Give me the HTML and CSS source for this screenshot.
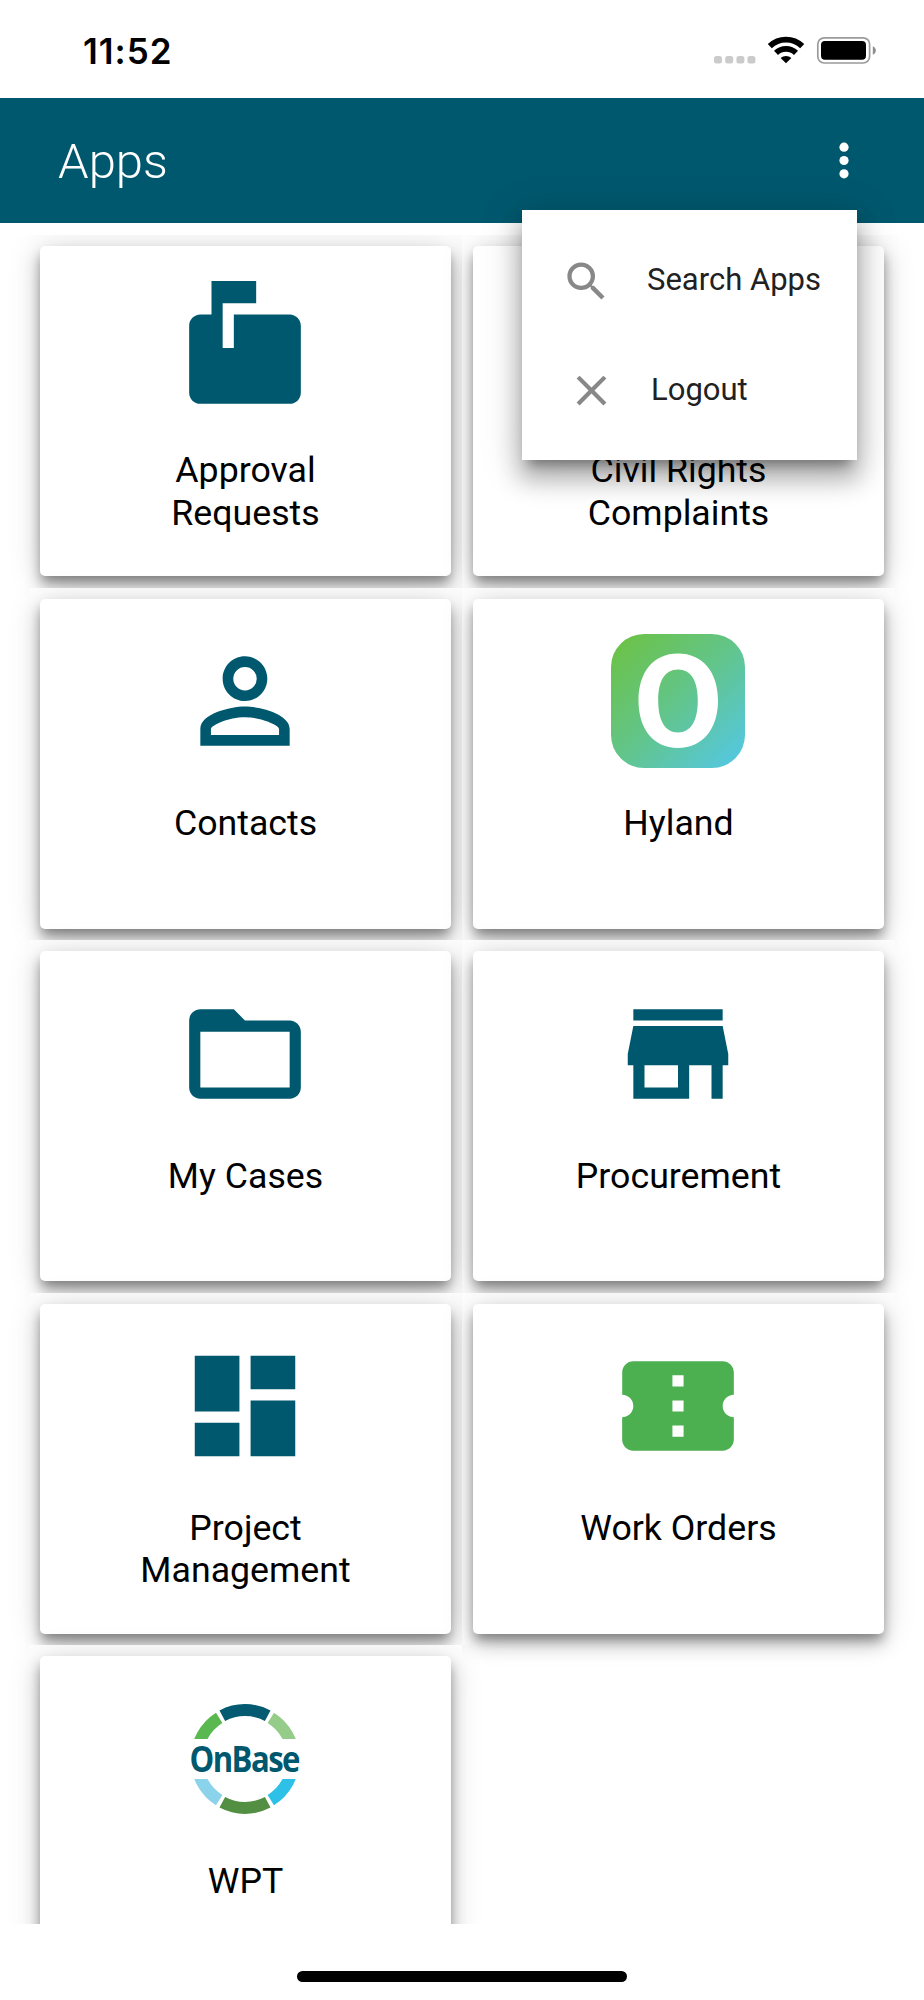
FILE: index.html
```html
<!DOCTYPE html>
<html lang="en">
<head>
<meta charset="utf-8">
<title>Apps</title>
<link rel="stylesheet" href="styles.css">
</head>
<body>
<div class="screen">
  <header class="status">
    <span class="time">11:52</span>
    <svg class="indicators" viewBox="0 0 170 40">
      <g fill="#cbcbcb">
        <rect x="4" y="26" width="8" height="7.5" rx="2.5"/><rect x="15.2" y="26" width="8" height="7.5" rx="2.5"/><rect x="26.4" y="26" width="8" height="7.5" rx="2.5"/><rect x="37.4" y="26" width="8" height="7.5" rx="2.5"/>
      </g>
      <g fill="none" stroke="#000" stroke-width="5.8">
        <path d="M59.800 16.200a23.400 23.400 0 0 1 32.400 0"/>
        <path d="M66 22.800a14.600 14.600 0 0 1 20 0"/>
      </g>
      <path d="M70.600 27.900a8.300 8.300 0 0 1 10.800 0L76 33.200z"/>
      <rect x="107.800" y="7.800" width="51.800" height="25.200" rx="6.500" fill="none" stroke="#9b9b9b" stroke-width="1.700"/>
      <rect x="111" y="11" width="45" height="18.800" rx="4"/>
      <path d="M162.800 16.200c4 1.600 4 7 0 8.600z" fill="#8d8d8d"/>
    </svg>
  </header>

  <nav class="toolbar">
    <h1 class="title">Apps</h1>
    <svg class="more" viewBox="0 0 10 38" fill="#fff"><circle cx="5" cy="5.200" r="4.600"/><circle cx="5" cy="18.500" r="4.600"/><circle cx="5" cy="31.800" r="4.600"/></svg>
    <div class="menu">
      <div class="menu-item">
        <svg class="menu-icon" viewBox="0 0 24 24"><path d="M15.5 14h-.79l-.28-.27A6.471 6.471 0 0 0 16 9.5 6.5 6.5 0 1 0 9.5 16c1.61 0 3.09-.59 4.23-1.57l.27.28v.79l5 4.99L20.49 19l-4.99-5zm-6 0C7.01 14 5 11.99 5 9.5S7.01 5 9.5 5 14 7.01 14 9.5 11.99 14 9.5 14z"/></svg>
        <span class="menu-text">Search Apps</span>
      </div>
      <div class="menu-item logout">
        <svg class="menu-icon" viewBox="0 0 24 24"><path d="M19 6.41 17.59 5 12 10.59 6.41 5 5 6.41 10.59 12 5 17.59 6.41 19 12 13.41 17.59 19 19 17.59 13.41 12z"/></svg>
        <span class="menu-text">Logout</span>
      </div>
    </div>
  </nav>

  <main class="apps">
    <div class="cell"><section class="card">
      <svg class="icon" viewBox="0 0 24 24"><path d="M20 6H10v6H8V4h6V0H6v6H4c-1.1 0-2 .9-2 2v12c0 1.1.9 2 2 2h16c1.1 0 2-.9 2-2V8c0-1.1-.9-2-2-2z"/></svg>
      <p class="label">Approval<br>Requests</p>
    </section></div>
    <div class="cell"><section class="card">
      <div class="icon"></div>
      <p class="label">Civil Rights<br>Complaints</p>
    </section></div>
    <div class="cell"><section class="card">
      <svg class="icon" viewBox="0 0 24 24"><path d="M12 5.9a2.1 2.1 0 1 1 0 4.2 2.1 2.1 0 0 1 0-4.2m0 9c2.97 0 6.1 1.46 6.1 2.1v1.1H5.9V17c0-.64 3.13-2.1 6.1-2.1M12 4C9.79 4 8 5.79 8 8s1.79 4 4 4 4-1.79 4-4-1.79-4-4-4zm0 9c-2.67 0-8 1.34-8 4v3h16v-3c0-2.66-5.33-4-8-4z"/></svg>
      <p class="label">Contacts</p>
    </section></div>
    <div class="cell"><section class="card">
      <svg class="icon" viewBox="0 0 134 134">
        <defs><linearGradient id="hy" x1="0" y1="0" x2="1" y2="1"><stop offset=".08" stop-color="#6bc24b"/><stop offset=".5" stop-color="#62c58b"/><stop offset=".93" stop-color="#55c7dc"/></linearGradient></defs>
        <rect width="134" height="134" rx="33" fill="url(#hy)"/>
        <path fill="#fff" fill-rule="evenodd" d="M67 19.400c25 0 40 19 40 47s-15 47.500-40 47.500-39.500-19.500-39.500-47.500 14.500-47 39.500-47zm0 16c-13 0-19.800 11-19.800 31s6.800 32 19.800 32 19.800-12 19.800-32-6.800-31-19.800-31z"/>
      </svg>
      <p class="label">Hyland</p>
    </section></div>
    <div class="cell"><section class="card">
      <svg class="icon" viewBox="0 0 24 24"><path d="M20 6h-8l-2-2H4c-1.100 0-2 .9-2 2v12c0 1.100.9 2 2 2h16c1.100 0 2-.9 2-2V8c0-1.100-.9-2-2-2zm0 12H4V8h16v10z"/></svg>
      <p class="label">My Cases</p>
    </section></div>
    <div class="cell"><section class="card">
      <svg class="icon" viewBox="0 0 24 24"><path d="M20 4H4v2h16V4zm1 10v-2l-1-5H4l-1 5v2h1v6h10v-6h4v6h2v-6h1zm-9 4H6v-4h6v4z"/></svg>
      <p class="label">Procurement</p>
    </section></div>
    <div class="cell"><section class="card">
      <svg class="icon" viewBox="0 0 24 24"><path d="M3 13h8V3H3v10zm0 8h8v-6H3v6zm10 0h8V11h-8v10zm0-18v6h8V3h-8z"/></svg>
      <p class="label">Project<br>Management</p>
    </section></div>
    <div class="cell"><section class="card">
      <svg class="icon green" viewBox="0 0 24 24"><path d="M22 10V6c0-1.110-.9-2-2-2H4c-1.100 0-1.990.89-1.990 2v4c1.100 0 1.990.9 1.990 2s-.89 2-2 2v4c0 1.100.9 2 2 2h16c1.100 0 2-.9 2-2v-4c-1.100 0-2-.9-2-2s.9-2 2-2zm-9 7.500h-2v-2h2v2zm0-4.500h-2v-2h2v2zm0-4.500h-2v-2h2v2z"/></svg>
      <p class="label">Work Orders</p>
    </section></div>
    <div class="cell"><section class="card">
      <svg class="icon" viewBox="0 0 134 134">
        <defs>
          <clipPath id="ring"><path d="M0 0h134v47H0zM0 87h134v47H0z"/></clipPath>
        </defs>
        <g clip-path="url(#ring)" fill="none" stroke-width="12">
          <path stroke="#045a70" d="M44.300 23.700A48.500 48.500 0 0 1 89.700 23.700"/>
          <path stroke="#95cc8a" d="M92.800 25.900A48.500 48.500 0 0 1 115.500 67"/>
          <path stroke="#2ec1e8" d="M115.500 67A48.500 48.500 0 0 1 92.800 108.100"/>
          <path stroke="#528f42" d="M89.700 110.300A48.500 48.500 0 0 1 44.300 110.300"/>
          <path stroke="#8ad3ea" d="M41.200 108.100A48.500 48.500 0 0 1 18.500 67"/>
          <path stroke="#59b950" d="M18.500 67A48.500 48.500 0 0 1 41.200 25.900"/>
        </g>
        <text class="onbase" transform="translate(11.500 80) scale(.865 1)">OnBase</text>
      </svg>
      <p class="label">WPT</p>
    </section></div>
  </main>

  <footer class="home"><div class="home-bar"></div></footer>
</div>
</body>
</html>
```
FILE: styles.css
```css
* { box-sizing: border-box; }
body { margin: 0; background: #fff; font-family: Roboto, sans-serif; color: #000; }
.screen { width: 924px; height: 2000px; display: flex; flex-direction: column; overflow: hidden; }

.status { flex: none; height: 98.300px; display: flex; justify-content: space-between; padding: 30px 44px 0 83px; }
.time { font: 600 35px/42px Inter, sans-serif; letter-spacing: 1px; }
.indicators { width: 170px; height: 40px; }

.toolbar { flex: none; position: relative; z-index: 2; height: 125px; background: #00586e; display: flex; align-items: center; justify-content: space-between; padding: 0 75px 0 58px; }
.title { margin: 0; padding-top: 2px; font-size: 49px; font-weight: 300; line-height: 60px; color: #fff; }
.more { width: 10px; height: 38px; }

.menu { position: absolute; top: 112px; left: 522px; width: 335px; height: 250px; background: #fff; padding: 16px 0 14px; box-shadow: 0 11px 11px -7px rgba(0,0,0,.34), 0 18px 22px 2px rgba(0,0,0,.24), 0 7px 36px 4px rgba(0,0,0,.17); }
.menu-item { height: 110px; display: flex; align-items: center; font-size: 31px; color: #212121; gap: 35px; padding-left: 39px; }
.menu-icon { width: 51px; height: 51px; fill: #888; }
.menu-text { padding-bottom: 3px; }
.logout { height: 108px; padding-left: 44px; gap: 34px; }
.logout .menu-text { padding-bottom: 1px; }

.apps { flex: none; height: 1689px; margin-top: 11.700px; overflow: hidden; padding: 0 29px; display: grid; grid-template-columns: 433px 433px; grid-auto-rows: 352.600px; align-content: start; }
/* each tile paints over the shadow cast by the tiles before it */
.cell { position: relative; padding: 11px; background: #fff; }
.card { height: 330px; border-radius: 5px; background: #fff; box-shadow: 0 7px 11px -2px rgba(0,0,0,.33), 0 11px 18px 0 rgba(0,0,0,.2), 0 2px 33px 0 rgba(0,0,0,.16); display: flex; flex-direction: column; align-items: center; padding-top: 35.400px; }
.icon { flex: none; display: block; width: 134px; height: 134px; margin-right: 1px; fill: #00586e; overflow: visible; }
.green { fill: #4caf50; }
.label { margin: 34px 0 0; font-size: 35.700px; line-height: 42.200px; text-align: center; }
.onbase { font-family: "Open Sans", sans-serif; font-size: 36px; font-weight: 700; letter-spacing: -1.800px; }

.home { flex: 1; display: flex; justify-content: center; align-items: flex-start; padding-top: 47px; }
.home-bar { width: 330px; height: 11px; border-radius: 6px; background: #000; }
```
